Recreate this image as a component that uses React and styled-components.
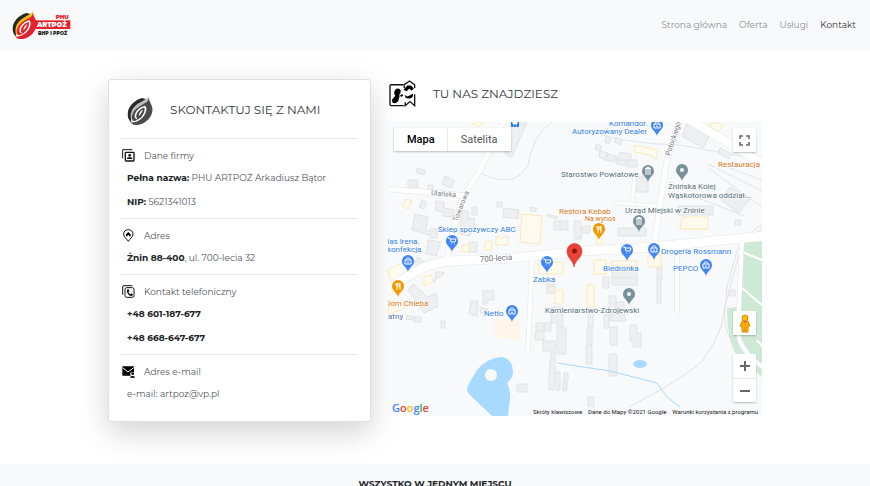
import React from "react";
import styled, { createGlobalStyle } from "styled-components";

const GlobalStyle = createGlobalStyle`
  * { box-sizing: border-box; }
  body {
    margin: 0;
    background: #fff;
    color: #212529;
    font-family: Montserrat, Inter, "Noto Sans", sans-serif;
    font-size: 9px;
    line-height: 16px;
  }
  h2, h3, p { margin: 0; font-weight: 400; }
  button { font: inherit; border: 0; padding: 0; cursor: pointer; }
`;

const Navbar = styled.header`
  display: flex;
  align-items: center;
  justify-content: space-between;
  height: 50px;
  padding: 0 14px 0 12px;
  background: #f8f9fb;
`;

const Brand = styled.a`
  display: flex;
`;

const NavLinks = styled.nav`
  display: flex;
  gap: 12px;
`;

const NavLink = styled.a`
  color: ${(p) => (p.$active ? "#34373a" : "#8e8f91")};
  text-decoration: none;
`;

const Main = styled.main`
  display: grid;
  grid-template-columns: 263fr 374fr;
  gap: 17px;
  align-items: start;
  padding: 29px 108px 42px;
`;

const Card = styled.section`
  padding: 0 12px 11px;
  border: 1px solid #dfdfdf;
  border-radius: 3px;
  background: #fff;
  box-shadow: 0 10px 30px rgba(0, 0, 0, 0.18);
`;

const CardHeader = styled.div`
  display: flex;
  align-items: center;
  gap: 16px;
  height: 58px;
  padding: 2px 6px 0;
`;

const Heading = styled.h2`
  font-size: 12px;
  line-height: 18px;
  color: #33373b;
`;

const Group = styled.section`
  padding: 6px 0 4px;
  border-top: 1px solid #e6e6e6;
`;

const GroupTitle = styled.h3`
  display: flex;
  align-items: center;
  gap: 9px;
  height: 21px;
  padding-left: 1px;
  font-size: 9px;
  color: #50555a;
`;

const Detail = styled.p`
  padding: 4px 6px;
  color: #50555a;
  white-space: nowrap;

  b { font-weight: 700; color: #212529; }
`;

const Location = styled.section`
  min-width: 0;
`;

const LocationHeader = styled.div`
  display: flex;
  align-items: center;
  gap: 17px;
  height: 43px;
  padding: 0 0 14px 1px;
`;

const MapFrame = styled.div`
  position: relative;
  height: 294px;
  overflow: hidden;
  background: #f8f9fb;
  font-family: Roboto, sans-serif;
`;

const MapCanvas = styled.svg`
  display: block;
  width: 100%;
  height: 100%;
`;

const MapTypes = styled.div`
  position: absolute;
  top: 6px;
  left: 6px;
  display: flex;
  background: #fff;
  box-shadow: 0 1px 2px rgba(0, 0, 0, 0.25);
`;

const MapType = styled.button`
  height: 23px;
  padding: 0 13px;
  background: #fff;
  font-size: 11px;
  font-weight: ${(p) => (p.$active ? 500 : 400)};
  color: ${(p) => (p.$active ? "#000" : "#565656")};

  & + & { box-shadow: -1px 0 0 #e9e9e9; }
`;

const ControlStack = styled.div`
  position: absolute;
  right: 6px;
  bottom: 14px;
  display: flex;
  flex-direction: column;
  gap: 19px;
`;

const ControlBox = styled.div`
  display: flex;
  flex-direction: column;
  border-radius: 1px;
  background: #fff;
  box-shadow: 0 1px 2px rgba(0, 0, 0, 0.25);
`;

const Control = styled.button`
  display: flex;
  align-items: center;
  justify-content: center;
  width: 23px;
  height: 24px;
  background: transparent;

  & + & { border-top: 1px solid #e6e6e6; }
`;

const FullscreenBox = styled(ControlBox)`
  position: absolute;
  top: 6px;
  right: 6px;
`;

const Wordmark = styled.div`
  position: absolute;
  left: 4px;
  bottom: 0;
  font-family: "Open Sans", Roboto, sans-serif;
  font-size: 11px;
  font-weight: 600;
  line-height: 16px;
`;

const Letter = styled.span`
  color: ${(p) => p.$color};
`;

const Attribution = styled.div`
  position: absolute;
  right: 0;
  bottom: 0;
  display: flex;
  gap: 6px;
  padding: 0 4px;
  background: rgba(248, 249, 251, 0.7);
  font-size: 6px;
  line-height: 9px;
  color: #222;

  a { color: inherit; text-decoration: none; }
`;

const Footer = styled.footer`
  padding: 12px 12px 24px;
  background: #f8f9fb;
  text-align: center;
`;

const FooterTitle = styled.h2`
  font-size: 9px;
  font-weight: 700;
  line-height: 16px;
`;

function Flame({ left, edge, body }) {
  return (
    <>
      <path d="M44 9C24 14 3 32 2 54C1 66 6 75 13 80C9 64 13 47 27 33C36 23 47 18 55 12Z" fill={left} />
      <path d="M63 3C61 15 25 21 14 45C8 58 10 70 17 78C15 59 27 43 44 31C52 25 60 21 65 15Z" fill={edge} />
      <path d="M63 10C66 24 77 33 73 50C68 72 44 89 24 87C17 87 13 83 10 80C15 80 19 79 22 77C14 74 12 64 17 53C23 38 43 30 55 22C60 18 62 15 63 10Z" fill={body} />
      <path d="M52 31C36 35 23 47 22 61C22 67 26 71 31 70C27 67 26 63 27 59C29 48 39 39 50 36C54 45 46 62 34 70C28 74 21 77 13 79C30 80 44 69 51 57C57 46 58 36 52 31Z" fill="#fff" />
      <path d="M46 43C40 45 34 53 34 61C38 58 43 51 46 43Z" fill="#fff" />
    </>
  );
}

function BrandLogo() {
  return (
    <svg width="60" height="30" viewBox="0 0 180 90" role="img" aria-label="PHU ARTPOŻ BHP i PPOŻ">
      <Flame left="#272822" edge="#f6b918" body="#e32229" />
      <rect x="71" y="31" width="104" height="26" fill="#e32229" />
      <g fontFamily="Montserrat, Inter, sans-serif" fontWeight="900">
        <text x="131" y="27" fontSize="17" fill="#e32229">PHU</text>
        <text x="75" y="51" fontSize="20" fill="#fff">ARTPOŻ</text>
        <text x="78" y="75" fontSize="14" fill="#272822">BHP i PPOŻ</text>
      </g>
    </svg>
  );
}

function FlameIcon() {
  return (
    <svg width="27" height="31" viewBox="0 0 78 90" aria-hidden="true">
      <Flame left="#292929" edge="#bdbdbd" body="#4b4b4b" />
    </svg>
  );
}

const iconProps = { width: 13, height: 13, viewBox: "0 0 39 39", "aria-hidden": true };

function CompanyIcon() {
  return (
    <svg {...iconProps}>
      <path d="M2 28V2H31" fill="none" stroke="#111" strokeWidth="3" />
      <rect x="10" y="10" width="26" height="26" rx="2" fill="none" stroke="#111" strokeWidth="4" />
      <circle cx="23" cy="19" r="4" />
      <path d="M15 30V28C17 24 29 24 31 28V30Z" />
    </svg>
  );
}

function AddressIcon() {
  return (
    <svg {...iconProps}>
      <path d="M19 37C15 29 5 25 5 15C5 7 11 2 19 2S33 7 33 15C33 25 23 29 19 37Z" fill="none" stroke="#111" strokeWidth="3" />
      <path d="M12 16L19 9L26 16V22H21V18H17V22H12Z" />
    </svg>
  );
}

function PhoneIcon() {
  return (
    <svg {...iconProps}>
      <path d="M2 29V6Q2 2 6 2H31" fill="none" stroke="#111" strokeWidth="3" />
      <rect x="9" y="8" width="27" height="29" rx="5" fill="none" stroke="#111" strokeWidth="3" />
      <path d="M15 14L20 13L22 19L19 21C21 25 23 27 26 28L29 25L33 29L29 33C20 32 14 24 15 14Z" />
    </svg>
  );
}

function MailIcon() {
  return (
    <svg {...iconProps}>
      <path d="M1 4H36V21H31A6 6 0 0 0 26 31V32H1Z" />
      <path d="M2 8L18 21L35 8" fill="none" stroke="#fff" strokeWidth="3" />
      <circle cx="32" cy="26" r="4" />
      <path d="M24 38C25 31 38 31 39 38Z" />
    </svg>
  );
}

function RouteIcon() {
  return (
    <svg width="27" height="27" viewBox="0 0 80 80" aria-hidden="true">
      <path d="M42 14H6Q3 14 3 18V72Q3 76 7 76H44M76 42V76L62 64L48 76V66M45 24V14L61 3L76 14V24" fill="none" stroke="#111" strokeWidth="4" />
      <ellipse cx="25" cy="36" rx="9" ry="11" transform="rotate(25 25 36)" />
      <path d="M9 58Q15 47 28 52Q31 58 25 65Q18 71 10 67Z" />
      <path d="M14 54L20 42L32 46L29 56Z" />
      <path d="M43 29L54 16H65L74 25L67 31L60 26L52 33ZM46 44L54 49L61 46L72 40L70 50Q61 57 50 53Z" />
      <path d="M34 48L41 44" stroke="#111" strokeWidth="6" />
    </svg>
  );
}

const BLUE = "#4285f4";
const ORANGE = "#f29900";
const SLATE = "#78909c";

const glyphs = {
  cart: <path d="M-4 -3H-2L-1 1H3L4 -2H-2M-1 3H-0.5M2 3H2.5" fill="none" stroke="#fff" strokeWidth="1" />,
  bag: <path d="M-3 -1H3V3H-3ZM-2 -1C-2 -4 2 -4 2 -1M-1 1Q0 2 1 1" fill="none" stroke="#fff" strokeWidth="1" />,
  food: <path d="M-2 -3V-1Q-2 0 -1 0M0 -3V-1Q0 0 -1 0V4M2 4V-3Q1 -2 1 1H2M-1 -3V0" fill="none" stroke="#fff" strokeWidth="1" />,
  office: <path d="M-3 -2L0 -4L3 -2ZM-2 -1V2M0 -1V2M2 -1V2M-3 3H3" fill="#fff" stroke="#fff" strokeWidth="1" />,
  dot: <circle r="2" fill="#fff" />,
};

const pins = [
  [657, 125, BLUE, "bag"], [648, 171, SLATE, "office"], [682, 170, SLATE, "dot"],
  [599, 229, ORANGE, "food"], [639, 221, SLATE, "office"], [452, 241, BLUE, "cart"],
  [408, 261, BLUE, "bag"], [398, 286, ORANGE, "food"], [547, 262, BLUE, "cart"],
  [627, 250, BLUE, "cart"], [654, 249, BLUE, "bag"], [706, 265, BLUE, "bag"],
  [629, 294, SLATE, "dot"], [512, 311, BLUE, "bag"],
];

const labels = [
  [609, 126, "Komandor.", "#2f7ce0"],
  [572, 134, "Autoryzowany Dealer", "#2f7ce0"],
  [561, 177, "Starostwo Powiatowe", "#546e7a"],
  [718, 167, "Restauracja", "#d3791b"],
  [668, 189, "Żnińska Kolej", "#546e7a"],
  [668, 198, "Wąskotorowa oddział...", "#546e7a"],
  [625, 213, "Urząd Miejski w Żninie", "#546e7a"],
  [559, 214, "Restora Kebab", "#d3791b"],
  [438, 232, "Sklep spożywczy ABC", "#2f7ce0"],
  [387, 244, "łas Irena.", "#2f7ce0"],
  [387, 252, "konfekcja", "#2f7ce0"],
  [533, 282, "Zabka", "#2f7ce0"],
  [603, 271, "Biedronka", "#2f7ce0"],
  [661, 254, "Drogeria Rossmann", "#2f7ce0"],
  [673, 271, "PEPCO", "#2f7ce0"],
  [385, 306, "Dom Chleba", "#d3791b"],
  [388, 319, "atny", "#5c6bc0"],
  [484, 316, "Netto", "#2f7ce0"],
  [545, 313, "Kamieniarstwo-Zdrojewski", "#546e7a"],
];

const greyBuildings = [
  "M417 168L426 171L424 175L416 172Z", "M408 180H418V188H408Z", "M428 185H433V190H428Z",
  "M445 176L455 181L451 188L442 184Z", "M512 122H527L512 157L505 154Z",
  "M422 200L427 202L424 209L419 207Z", "M415 214L428 217L426 230L437 233L436 237L412 230Z",
  "M436 201L444 202V208L454 210L453 217L443 216V212L435 210Z", "M430 229H437V238H430Z",
  "M462 210L469 212L468 218L475 219L473 227L470 236L460 234Z", "M472 207H477V215H472Z",
  "M504 208L519 210L518 219L503 217Z", "M530 207L537 208L535 212L530 211Z", "M497 202H502V207H497Z",
  "M547 214L558 217L556 219L547 216Z", "M554 221H568V230H554ZM560 221V230", "M575 234H581V239H575Z",
  "M428 240L441 242L436 256L426 254Z", "M469 242H477V252H469Z", "M418 257L424 262L418 270L412 265Z",
  "M436 272L444 272L443 275L437 278L434 283Z", "M413 284L428 297L436 293L438 306L424 313L408 290Z",
  "M407 315L414 317L413 320L406 319ZM414 317H421V322H414Z", "M441 321H445V328H441Z",
  "M471 301L478 301L477 316L469 314ZM480 307L488 309L486 314L480 312Z", "M483 291H494V300H487V304H483Z",
  "M536 323H544V331H536ZM544 323H551V331H544ZM535 332H544V340H535Z",
  "M551 307H563V327H557V323H551Z", "M557 328H566V354H557Z", "M543 341H555V351H543Z",
  "M551 352H555V382L553 390H549V377Z", "M556 372H560V390H556ZM564 373H568V381H564ZM563 382H567V391H563Z",
  "M517 384H527V392H517Z", "M547 278H555V285H547ZM547 286H555V293H547Z",
  "M606 136L611 139L609 144L605 142ZM616 137L622 140L620 145L614 142Z",
  "M596 144L602 146L600 151L595 149ZM600 151L608 153L606 160L599 157ZM607 154L616 156L614 162L606 160ZM617 157L626 159L625 166L616 163ZM627 160H637V167H627Z",
  "M620 152L631 154V160H618Z", "M636 177H648V192H636Z", "M688 122L709 137L703 148L682 136Z",
  "M720 148L732 154L729 159L718 153Z", "M730 187L750 199L739 213L721 200Z",
  "M678 206H713V215H678Z", "M618 228H646V236H618Z", "M574 221H581V238H574ZM582 226H590V233H582Z",
  "M612 266H637V285H612ZM612 278H637", "M603 277H609V288H603Z",
  "M657 267H662V280H657ZM657 280H661V303H657Z",
  "M609 296H616V312H609ZM616 302H624V309H616Z",
  "M588 310H593V327H588ZM587 328H592V344H587ZM586 345H592V364H586Z",
  "M604 315H609V328H604ZM610 327H617V345H610ZM610 314H625V321H610Z",
  "M630 325H637V333H641V347H633V341H630Z", "M609 354H617V376H609Z",
  "M588 397H594V412H588Z", "M729 290H735V296H729Z", "M735 220H741V225H735Z",
];

const yellowBuildings = [
  "M471 122L478 127L485 122Z", "M407 199L412 201L408 209L402 206Z",
  "M522 214L542 216L540 244L520 242Z", "M496 237H508V245H496Z", "M485 241H492V250H485Z",
  "M462 245H469V252H462Z", "M388 270L405 261L415 273L392 286Z", "M424 277L431 275L434 281L424 286Z",
  "M539 262H563V274H539Z", "M555 290H563V304H555Z", "M594 260H606V274H594ZM612 261H637V266H612Z",
  "M597 236H602V244H597Z", "M648 255H661V267H648Z", "M587 285H594V308H587Z",
  "M635 145L658 150L656 159L650 155L634 152Z", "M682 217H708V229H680Z", "M394 301L404 304L404 309L388 314L389 301Z",
  "M716 122L724 126L718 132L709 125Z",
];

const roads = [
  ["M388 189L460 195", 5],
  ["M504 120L480 170L463 197L452 235L447 260", 5],
  ["M680 119L667 160L660 205L654 246", 5],
  ["M635 175L632 203M615 203L657 206", 3],
  ["M688 119L764 164", 8],
  ["M532 259L528 352", 4],
  ["M677 248V312", 4],
  ["M742 240L738 330Q738 350 764 368", 4],
  ["M382 293L413 273Q431 262 452 261L513 258L583 251L653 247L764 236", 9],
];

function MapDrawing() {
  return (
    <MapCanvas viewBox="388 122 374 294" preserveAspectRatio="xMidYMid slice" role="img" aria-label="Mapa okolicy">
      <rect x="388" y="122" width="374" height="294" fill="#f8f9fb" />
      <path d="M744 242L762 240V377L736 354Q727 340 727 308L738 307Z" fill="#ceead6" />
      <path d="M742 252L762 260M741 287L762 305M757 340L762 346" stroke="#fff" strokeWidth="2" fill="none" />
      <g fill="none" stroke="#e1e3e5" strokeWidth="1">
        <path d="M480 173Q515 190 528 165Q533 134 552 122" />
        <path d="M595 133Q630 144 680 145L762 160" />
        <path d="M762 224Q737 242 735 258L727 287Q727 330 703 360Q690 375 627 408" />
        <path d="M762 228Q743 240 738 258L724 310Q725 345 747 358" />
        <path d="M708 164L762 191M708 168L762 207M730 168L762 180M690 195L745 216" />
      </g>
      <g fill="#eeeff1" stroke="#e1e3e5" strokeWidth="1">
        {greyBuildings.map((d) => <path key={d} d={d} />)}
      </g>
      <g fill="#fefaee" stroke="#fbe9b9" strokeWidth="1">
        {yellowBuildings.map((d) => <path key={d} d={d} />)}
      </g>
      <path d="M495 319L521 321L520 340L495 337Z" fill="#fff5e9" />
      {roads.map(([d, width]) => (
        <path key={d} d={d} fill="none" stroke="#e3e5e8" strokeWidth={width + 1} strokeLinecap="round" />
      ))}
      {roads.map(([d, width]) => (
        <path key={d} d={d} fill="none" stroke="#fff" strokeWidth={width} strokeLinecap="round" />
      ))}
      <path d="M557 363L610 371L657 383L667 397L692 416" fill="none" stroke="#a8daff" strokeWidth="1" />
      <ellipse cx="640" cy="364" rx="7" ry="4" fill="#a8daff" />
      <path d="M467 388Q471 379 477 370Q487 358 501 357Q513 358 513 373Q512 379 507 383Q511 391 510 399L508 416H492L469 394Q467 391 467 388Z" fill="#a8daff" />
      <circle cx="491" cy="375" r="6" fill="#f8f9fb" />
      <g fontFamily="Roboto, sans-serif" fill="#73777b" stroke="#fff" strokeWidth="1" paintOrder="stroke">
        <text x="431" y="195" fontSize="7" transform="rotate(5 431 195)">Ulańska</text>
        <text x="457" y="222" fontSize="7" transform="rotate(-68 457 222)">Towarowa</text>
        <text x="670" y="156" fontSize="7" transform="rotate(-72 670 156)">Potockiego</text>
        <text x="480" y="262" fontSize="8" transform="rotate(-4 480 262)">700-lecia</text>
      </g>
      <rect x="511" y="119" width="8" height="8" rx="1" fill="#1a73e8" />
      <path d="M513 121H517V124H513ZM513 126H514M516 126H517" fill="#fff" stroke="#fff" strokeWidth="1" />
      {pins.map(([x, y, color, glyph]) => (
        <g key={`${x}-${y}`} transform={`translate(${x} ${y})`}>
          <path d="M0 11C-1 6 -6 5 -6 0A6 6 0 0 1 6 0C6 5 1 6 0 11Z" fill={color} />
          {glyphs[glyph]}
        </g>
      ))}
      <path d="M574 267C573 260 567 258 567 251A7 7 0 0 1 582 251C582 258 575 260 574 267Z" fill="#ea4335" stroke="#c5221f" strokeWidth="0.5" />
      <circle cx="574.5" cy="251" r="2.5" fill="#8b1510" />
      <g fontFamily="Roboto, sans-serif" fontSize="8" stroke="#fff" strokeWidth="1" paintOrder="stroke">
        {labels.map(([x, y, text, color]) => (
          <text key={text} x={x} y={y} fill={color}>{text}</text>
        ))}
        <text x="585" y="221" fontSize="7" fill="#d3791b">Na wynos</text>
      </g>
    </MapCanvas>
  );
}

const groups = [
  {
    title: "Dane firmy",
    Icon: CompanyIcon,
    rows: [<><b>Pełna nazwa:</b> PHU ARTPOŻ Arkadiusz Bątor</>, <><b>NIP:</b> 5621341013</>],
  },
  { title: "Adres", Icon: AddressIcon, rows: [<><b>Żnin 88-400</b>, ul. 700-lecia 32</>] },
  { title: "Kontakt telefoniczny", Icon: PhoneIcon, rows: [<b>+48 601-187-677</b>, <b>+48 668-647-677</b>] },
  { title: "Adres e-mail", Icon: MailIcon, rows: [<>e-mail: artpoz@vp.pl</>] },
];

const wordmark = [["G", "#4285f4"], ["o", "#ea4335"], ["o", "#fbbc04"], ["g", "#4285f4"], ["l", "#34a853"], ["e", "#ea4335"]];

export default function App() {
  return (
    <>
      <GlobalStyle />
      <Navbar>
        <Brand href="#"><BrandLogo /></Brand>
        <NavLinks>
          <NavLink href="#">Strona główna</NavLink>
          <NavLink href="#oferta">Oferta</NavLink>
          <NavLink href="#uslugi">Usługi</NavLink>
          <NavLink href="#kontakt" $active aria-current="page">Kontakt</NavLink>
        </NavLinks>
      </Navbar>
      <Main>
        <Card>
          <CardHeader>
            <FlameIcon />
            <Heading>SKONTAKTUJ SIĘ Z NAMI</Heading>
          </CardHeader>
          {groups.map(({ title, Icon, rows }) => (
            <Group key={title}>
              <GroupTitle><Icon />{title}</GroupTitle>
              {rows.map((row, i) => <Detail key={i}>{row}</Detail>)}
            </Group>
          ))}
        </Card>
        <Location>
          <LocationHeader>
            <RouteIcon />
            <Heading>TU NAS ZNAJDZIESZ</Heading>
          </LocationHeader>
          <MapFrame>
            <MapDrawing />
            <MapTypes>
              <MapType $active aria-pressed="true">Mapa</MapType>
              <MapType aria-pressed="false">Satelita</MapType>
            </MapTypes>
            <FullscreenBox>
              <Control aria-label="Pełny ekran">
                <svg width="11" height="11" viewBox="0 0 11 11">
                  <path d="M1 4V1H4M7 1H10V4M10 7V10H7M4 10H1V7" fill="none" stroke="#666" strokeWidth="1.5" />
                </svg>
              </Control>
            </FullscreenBox>
            <ControlStack>
              <ControlBox>
                <Control aria-label="Street View">
                  <svg width="12" height="19" viewBox="0 0 12 19">
                    <path d="M3 7Q6 5 9 7L11 12L9 13V18H3V13L1 12Z" fill="#f9ab00" stroke="#dc8b13" />
                    <circle cx="6" cy="4" r="3" fill="#fbbc04" stroke="#dc8b13" />
                    <path d="M4 7L6 9L8 7Z" fill="#e8622c" />
                    <path d="M6 13V18" stroke="#dc8b13" />
                  </svg>
                </Control>
              </ControlBox>
              <ControlBox>
                <Control aria-label="Powiększ">
                  <svg width="12" height="12" viewBox="0 0 12 12">
                    <path d="M1 6H11M6 1V11" stroke="#666" strokeWidth="2" />
                  </svg>
                </Control>
                <Control aria-label="Pomniejsz">
                  <svg width="12" height="12" viewBox="0 0 12 12">
                    <path d="M1 6H11" stroke="#666" strokeWidth="2" />
                  </svg>
                </Control>
              </ControlBox>
            </ControlStack>
            <Wordmark>
              {wordmark.map(([letter, color], i) => <Letter key={i} $color={color}>{letter}</Letter>)}
            </Wordmark>
            <Attribution>
              <a href="#skroty">Skróty klawiszowe</a>
              <span>Dane do Mapy ©2021 Google</span>
              <a href="#warunki">Warunki korzystania z programu</a>
            </Attribution>
          </MapFrame>
        </Location>
      </Main>
      <Footer>
        <FooterTitle>WSZYSTKO W JEDNYM MIEJSCU</FooterTitle>
      </Footer>
    </>
  );
}
